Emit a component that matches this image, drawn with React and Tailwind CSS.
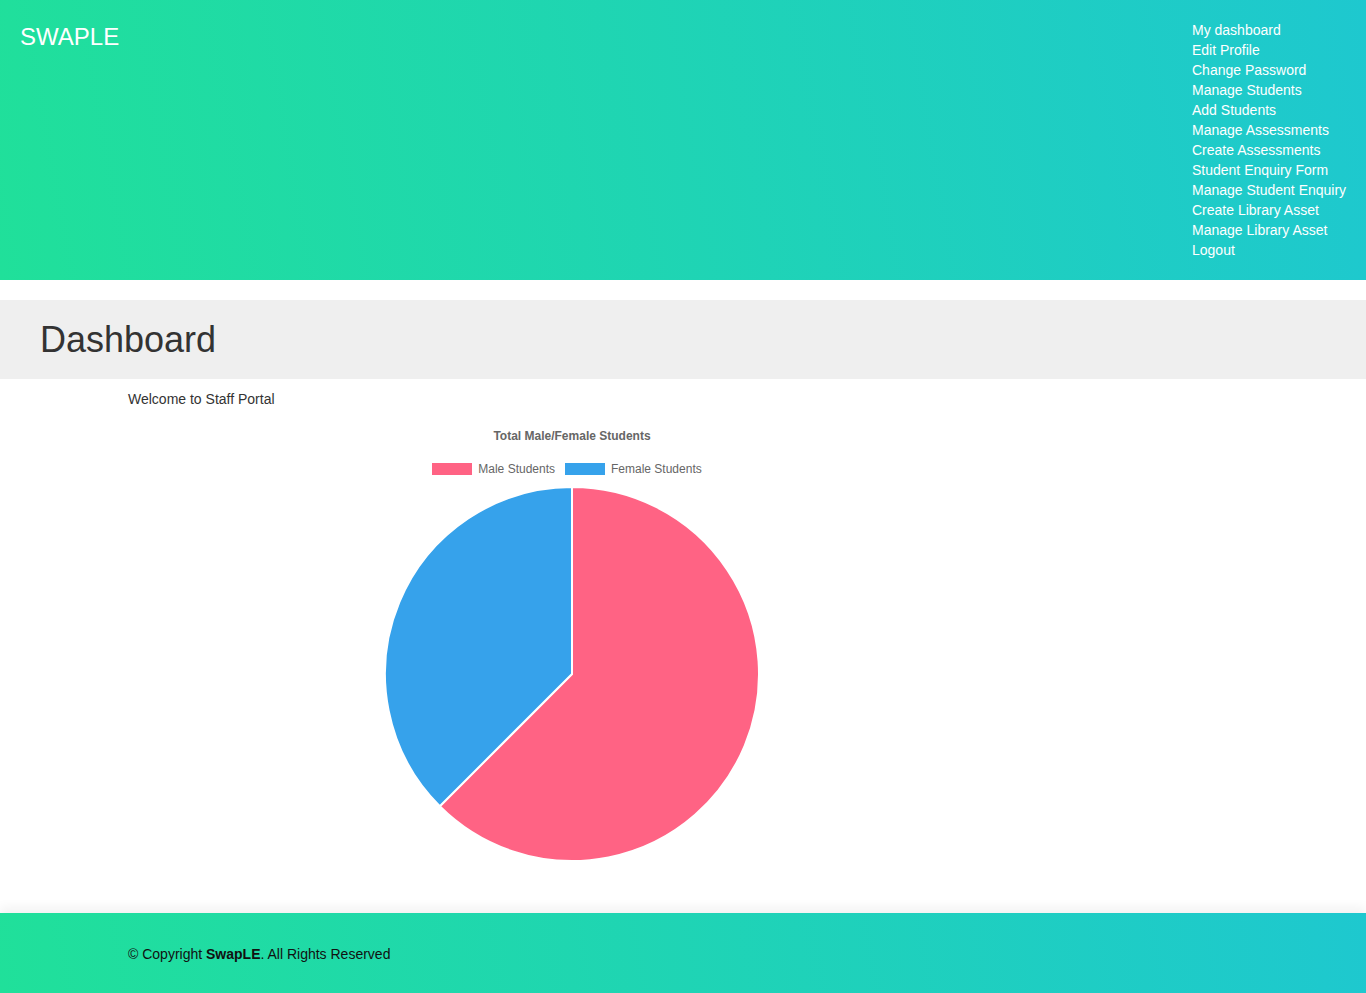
import React from "react";

const navLinks = [
  "My dashboard",
  "Edit Profile",
  "Change Password",
  "Manage Students",
  "Add Students",
  "Manage Assessments",
  "Create Assessments",
  "Student Enquiry Form",
  "Manage Student Enquiry",
  "Create Library Asset",
  "Manage Library Asset",
  "Logout",
];

function PieChart() {
  // male 62.5%, female 37.5% (Chart.js default colours)
  return (
    <svg width="376" height="376" viewBox="0 0 376 376">
      <path
        d="M188,188 L188,1 A187,187 0 1 1 55.77,320.23 Z"
        fill="#ff6384"
        stroke="#fff"
        strokeWidth="2"
        strokeLinejoin="round"
      />
      <path
        d="M188,188 L55.77,320.23 A187,187 0 0 1 188,1 Z"
        fill="#36a2eb"
        stroke="#fff"
        strokeWidth="2"
        strokeLinejoin="round"
      />
    </svg>
  );
}

export default function App() {
  return (
    <div className="min-h-screen bg-white font-['Liberation_Sans',Arial,sans-serif]">
      <header className="h-[280px] bg-[linear-gradient(80deg,#20e09a,#1ec8cf)] flex justify-between">
        <div className="pl-5 pt-[23px] text-white text-[24px] leading-[28px]">SWAPLE</div>
        <nav className="w-[174px] pt-5 flex flex-col">
          {navLinks.map((link) => (
            <a key={link} href="#" className="text-white text-[14px] leading-[20px]">
              {link}
            </a>
          ))}
        </nav>
      </header>

      <div className="mt-5 h-[79px] bg-[#efefef] px-10 flex items-center">
        <h1 className="text-[36px] leading-[40px] text-[#333] pt-[1px]">Dashboard</h1>
      </div>

      <main className="pl-[128px] pt-[10px] pb-[51px]">
        <p className="text-[14px] leading-[20px] text-[#333]">Welcome to Staff Portal</p>
        <div className="w-[888px] flex flex-col items-center">
          <div className="mt-[19px] text-[12px] leading-[16px] font-bold text-[#666]">
            Total Male/Female Students
          </div>
          <div className="mt-[17px] mr-[10px] flex items-center gap-[10px] text-[12px] leading-[16px] text-[#666]">
            <div className="flex items-center gap-[6px]">
              <span className="w-10 h-3 bg-[#ff6384] border border-[#ff6384]" />
              <span>Male Students</span>
            </div>
            <div className="flex items-center gap-[6px]">
              <span className="w-10 h-3 bg-[#36a2eb] border border-[#36a2eb]" />
              <span>Female Students</span>
            </div>
          </div>
          <div className="mt-[9px]">
            <PieChart />
          </div>
        </div>
      </main>

      <footer className="h-[81px] bg-[linear-gradient(80deg,#20e09a,#1ec8cf)] shadow-[0_-6px_10px_rgba(0,0,0,0.05)] pl-[128px] flex items-center">
        <p className="text-[14px] leading-[20px] text-[#111]">
          © Copyright <strong className="font-bold">SwapLE</strong>. All Rights Reserved
        </p>
      </footer>
    </div>
  );
}
